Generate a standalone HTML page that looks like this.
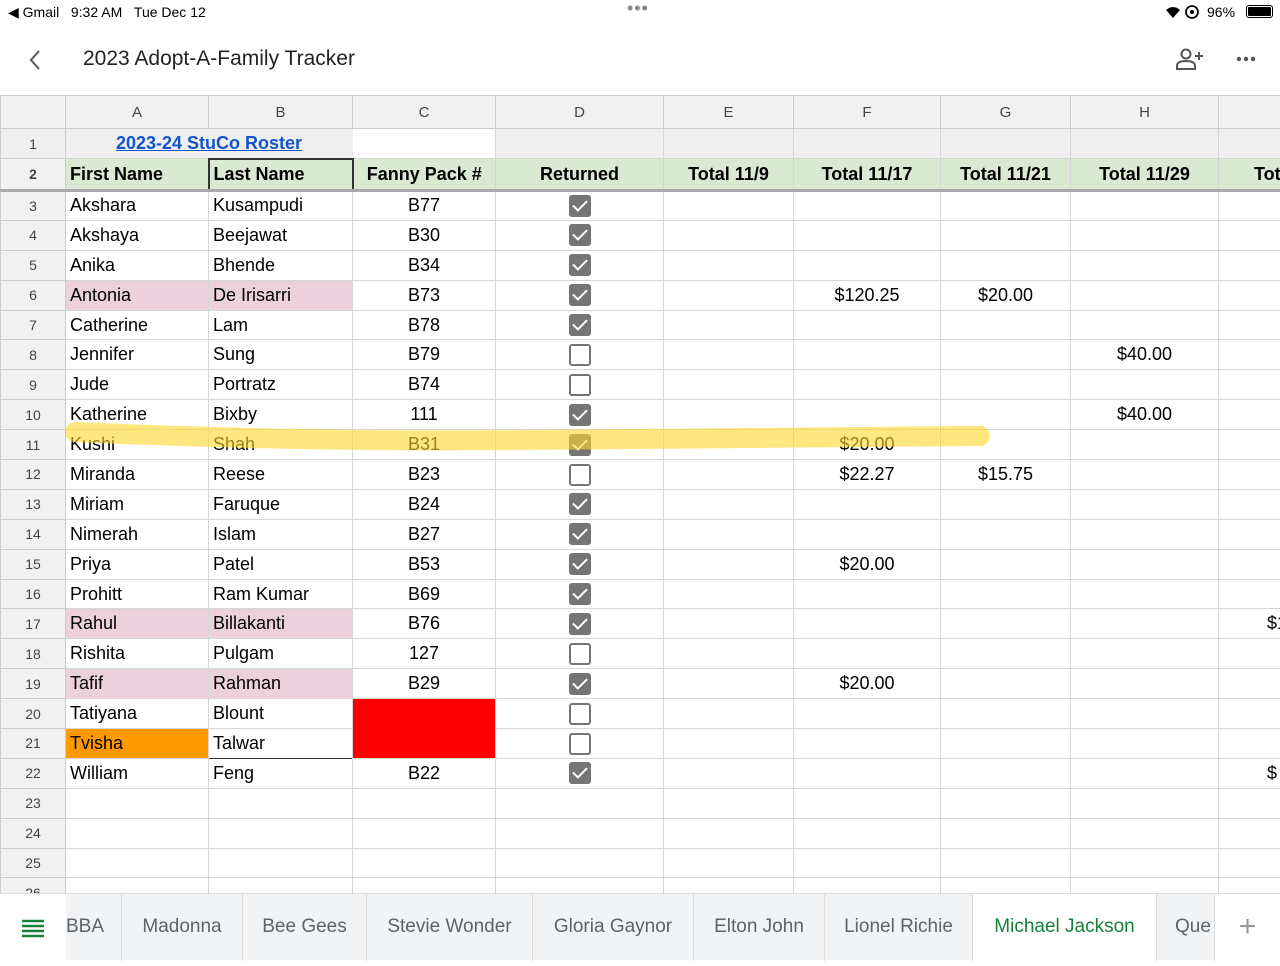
<!DOCTYPE html>
<html><head><meta charset="utf-8"><style>
*{margin:0;padding:0;box-sizing:border-box}
body{width:1280px;height:960px;overflow:hidden;background:#fff;font-family:"Liberation Sans",Arial,sans-serif;position:relative;color:#000}
.status{position:absolute;top:0;left:0;width:1280px;height:24px;font-size:14px}
.title{position:absolute;top:47px;left:83px;font-size:21px;color:#222}
table{position:absolute;top:95px;left:0;border-collapse:collapse;table-layout:fixed;width:1280px}
td{border:1px solid #d6d6d6;font-size:18px;white-space:nowrap;overflow:hidden;padding:0 4px;height:29.9px}
tr.hd td{height:33px;background:#f1f1f1;text-align:center;font-size:15px;color:#444;border-color:#ccc}
td.rn{background:#f1f1f1;text-align:center;font-size:14px;color:#444;border-color:#ccc}
tr.r1 td{height:30px;background:#efefef}
tr.r2 td{height:32px;background:#d9ead3;font-weight:bold;border-bottom:3px solid #aaa}
tr.r2 td.rn{background:#f1f1f1}
tr.r2 td.sel{border-top:2px solid #333;border-left:2px solid #333;border-right:2px solid #333}
.c{text-align:center}
.pk{background:#ead1dc}
.cb{display:inline-block;width:22px;height:22px;border-radius:3px;vertical-align:middle;position:relative}
.on{background:#757575}
.on:after{content:"";position:absolute;left:7px;top:2px;width:6px;height:12px;border:solid #fff;border-width:0 2.5px 2.5px 0;transform:rotate(45deg)}
.off{border:2.5px solid #757575;background:#fff}
.tabs{position:absolute;top:893px;left:0;width:1280px;height:67px;background:#f1f3f4;border-top:1px solid #ddd}
.tab{position:absolute;top:0;height:67px;line-height:66px;font-size:19px;color:#5f6368;border-right:1px solid #dcdcdc;text-align:center}
</style></head><body>
<div class="status">
<span style="position:absolute;left:8px;top:4px">◀ Gmail&nbsp;&nbsp;&nbsp;9:32 AM&nbsp;&nbsp;&nbsp;Tue Dec 12</span>
<span style="position:absolute;left:627px;top:-2px;font-size:18px;color:#888;letter-spacing:1px">•••</span>
<svg style="position:absolute;left:1165px;top:5px" width="36" height="14"><path d="M1 5 Q8 -1 15 5 L8 13 Z" fill="#000"/><circle cx="27" cy="7" r="6" fill="none" stroke="#000" stroke-width="1.8"/><circle cx="27" cy="7" r="2" fill="#000"/></svg>
<span style="position:absolute;left:1207px;top:4px">96%</span>
<span style="position:absolute;left:1246px;top:5px;width:27px;height:13px;border:1.5px solid #000;border-radius:3px;padding:1px"><span style="display:block;width:100%;height:100%;background:#000;border-radius:1px"></span></span>
</div>
<svg style="position:absolute;left:27px;top:48px" width="16" height="24"><path d="M12 3 L4 12 L12 21" fill="none" stroke="#555" stroke-width="2"/></svg>
<div class="title">2023 Adopt-A-Family Tracker</div>
<svg style="position:absolute;left:1175px;top:47px" width="30" height="26"><circle cx="11" cy="7" r="4.5" fill="none" stroke="#555" stroke-width="2"/><path d="M2 22 V19 Q2 14 11 14 Q20 14 20 19 V22 Z" fill="none" stroke="#555" stroke-width="2"/><path d="M20 9 H28 M24 5 V13" stroke="#555" stroke-width="2"/></svg>
<svg style="position:absolute;left:1236px;top:55px" width="22" height="8"><circle cx="3" cy="4" r="2.2" fill="#555"/><circle cx="10" cy="4" r="2.2" fill="#555"/><circle cx="17" cy="4" r="2.2" fill="#555"/></svg>
<table>
<colgroup><col style="width:65px"><col style="width:143px"><col style="width:144px"><col style="width:143px"><col style="width:168px"><col style="width:130px"><col style="width:147px"><col style="width:130px"><col style="width:148px"><col style="width:62px"></colgroup>
<tr class="hd"><td></td><td>A</td><td>B</td><td>C</td><td>D</td><td>E</td><td>F</td><td>G</td><td>H</td><td></td></tr>
<tr class="r1"><td class="rn">1</td><td colspan="2" class="c" style="border-right-color:#efefef"><span style="color:#1155cc;font-weight:bold;text-decoration:underline">2023-24 StuCo Roster</span></td><td style="background:#fff"></td><td></td><td></td><td></td><td></td><td></td><td></td></tr>
<tr class="r2"><td class="rn">2</td><td>First Name</td><td class="sel">Last Name</td><td class="c">Fanny Pack #</td><td class="c">Returned</td><td class="c">Total 11/9</td><td class="c">Total 11/17</td><td class="c">Total 11/21</td><td class="c">Total 11/29</td><td style="padding-left:35px">Tot</td></tr>
<tr><td class="rn">3</td><td>Akshara</td><td>Kusampudi</td><td class="c">B77</td><td class="c"><span class="cb on"></span></td><td></td><td></td><td></td><td></td><td></td></tr>
<tr><td class="rn">4</td><td>Akshaya</td><td>Beejawat</td><td class="c">B30</td><td class="c"><span class="cb on"></span></td><td></td><td></td><td></td><td></td><td></td></tr>
<tr><td class="rn">5</td><td>Anika</td><td>Bhende</td><td class="c">B34</td><td class="c"><span class="cb on"></span></td><td></td><td></td><td></td><td></td><td></td></tr>
<tr><td class="rn">6</td><td class="pk">Antonia</td><td class="pk">De Irisarri</td><td class="c">B73</td><td class="c"><span class="cb on"></span></td><td></td><td class="c">$120.25</td><td class="c">$20.00</td><td></td><td></td></tr>
<tr><td class="rn">7</td><td>Catherine</td><td>Lam</td><td class="c">B78</td><td class="c"><span class="cb on"></span></td><td></td><td></td><td></td><td></td><td></td></tr>
<tr><td class="rn">8</td><td>Jennifer</td><td>Sung</td><td class="c">B79</td><td class="c"><span class="cb off"></span></td><td></td><td></td><td></td><td class="c">$40.00</td><td></td></tr>
<tr><td class="rn">9</td><td>Jude</td><td>Portratz</td><td class="c">B74</td><td class="c"><span class="cb off"></span></td><td></td><td></td><td></td><td></td><td></td></tr>
<tr><td class="rn">10</td><td>Katherine</td><td>Bixby</td><td class="c">111</td><td class="c"><span class="cb on"></span></td><td></td><td></td><td></td><td class="c">$40.00</td><td></td></tr>
<tr><td class="rn">11</td><td>Kushi</td><td>Shah</td><td class="c">B31</td><td class="c"><span class="cb on"></span></td><td></td><td class="c">$20.00</td><td></td><td></td><td></td></tr>
<tr><td class="rn">12</td><td>Miranda</td><td>Reese</td><td class="c">B23</td><td class="c"><span class="cb off"></span></td><td></td><td class="c">$22.27</td><td class="c">$15.75</td><td></td><td></td></tr>
<tr><td class="rn">13</td><td>Miriam</td><td>Faruque</td><td class="c">B24</td><td class="c"><span class="cb on"></span></td><td></td><td></td><td></td><td></td><td></td></tr>
<tr><td class="rn">14</td><td>Nimerah</td><td>Islam</td><td class="c">B27</td><td class="c"><span class="cb on"></span></td><td></td><td></td><td></td><td></td><td></td></tr>
<tr><td class="rn">15</td><td>Priya</td><td>Patel</td><td class="c">B53</td><td class="c"><span class="cb on"></span></td><td></td><td class="c">$20.00</td><td></td><td></td><td></td></tr>
<tr><td class="rn">16</td><td>Prohitt</td><td>Ram Kumar</td><td class="c">B69</td><td class="c"><span class="cb on"></span></td><td></td><td></td><td></td><td></td><td></td></tr>
<tr><td class="rn">17</td><td class="pk">Rahul</td><td class="pk">Billakanti</td><td class="c">B76</td><td class="c"><span class="cb on"></span></td><td></td><td></td><td></td><td></td><td style="padding-left:48px">$1</td></tr>
<tr><td class="rn">18</td><td>Rishita</td><td>Pulgam</td><td class="c">127</td><td class="c"><span class="cb off"></span></td><td></td><td></td><td></td><td></td><td></td></tr>
<tr><td class="rn">19</td><td class="pk">Tafif</td><td class="pk">Rahman</td><td class="c">B29</td><td class="c"><span class="cb on"></span></td><td></td><td class="c">$20.00</td><td></td><td></td><td></td></tr>
<tr><td class="rn">20</td><td>Tatiyana</td><td>Blount</td><td rowspan="2" style="background:#f00"></td><td class="c"><span class="cb off"></span></td><td></td><td></td><td></td><td></td><td></td></tr>
<tr><td class="rn">21</td><td style="background:#ff9900">Tvisha</td><td style="border:1px solid #333;border-top-color:#d6d6d6">Talwar</td><td class="c"><span class="cb off"></span></td><td></td><td></td><td></td><td></td><td></td></tr>
<tr><td class="rn">22</td><td>William</td><td>Feng</td><td class="c">B22</td><td class="c"><span class="cb on"></span></td><td></td><td></td><td></td><td></td><td style="padding-left:48px">$</td></tr>
<tr><td class="rn">23</td><td></td><td></td><td></td><td></td><td></td><td></td><td></td><td></td><td></td></tr>
<tr><td class="rn">24</td><td></td><td></td><td></td><td></td><td></td><td></td><td></td><td></td><td></td></tr>
<tr><td class="rn">25</td><td></td><td></td><td></td><td></td><td></td><td></td><td></td><td></td><td></td></tr>
<tr><td class="rn">26</td><td></td><td></td><td></td><td></td><td></td><td></td><td></td><td></td><td></td></tr>
</table>
<svg style="position:absolute;left:0;top:410px" width="1000" height="60"><path d="M75 22 Q300 32 520 30 Q760 28 980 26" fill="none" stroke="rgba(255,214,40,0.6)" stroke-width="20" stroke-linecap="round"/></svg>
<div class="tabs">
<div class="tab" style="left:0;width:66px;background:#fff;border:none"><svg width="24" height="20" style="margin-top:24px"><path d="M1 3H23M1 8H23M1 13H23M1 18H23" stroke="#188038" stroke-width="2.5"/></svg></div>
<div class="tab" style="left:66px;width:56px;text-align:left">BBA</div>
<div class="tab" style="left:122px;width:121px">Madonna</div>
<div class="tab" style="left:243px;width:124px">Bee Gees</div>
<div class="tab" style="left:367px;width:166px">Stevie Wonder</div>
<div class="tab" style="left:533px;width:161px">Gloria Gaynor</div>
<div class="tab" style="left:694px;width:131px">Elton John</div>
<div class="tab" style="left:825px;width:148px">Lionel Richie</div>
<div class="tab" style="left:973px;width:184px;background:#fff;color:#188038">Michael Jackson</div>
<div class="tab" style="left:1157px;width:58px;text-align:left;padding-left:18px">Que</div>
<div class="tab" style="left:1215px;width:65px;background:#fff;border:none;font-size:30px;color:#999">+</div>
</div>
</body></html>
